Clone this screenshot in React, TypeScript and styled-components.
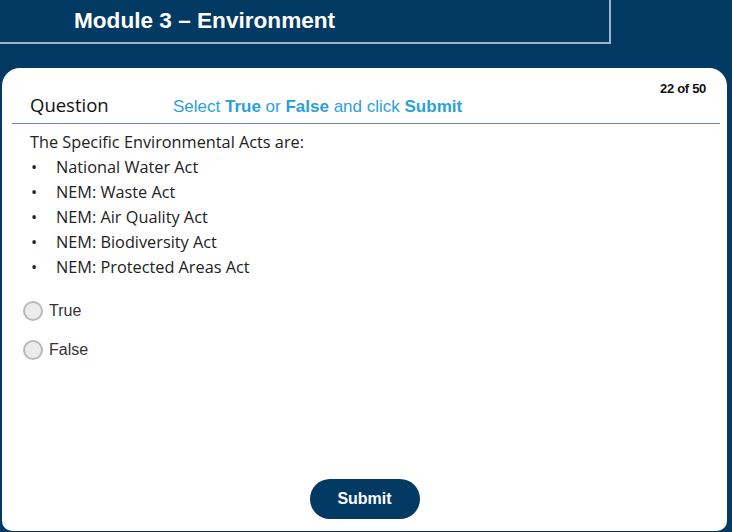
import React, { useState } from "react";
import styled, { createGlobalStyle } from "styled-components";

const navy = "#033a64";

const GlobalStyle = createGlobalStyle`
  html, body {
    margin: 0;
    padding: 0;
    background: ${navy};
    height: 100%;
  }
  body {
    font-family: "Liberation Sans", Arial, sans-serif;
    overflow: hidden;
  }
`;

const Page = styled.div`
  width: 732px;
  height: 532px;
  display: flex;
  flex-direction: column;
  background: ${navy};
`;

const TitleBar = styled.header`
  box-sizing: border-box;
  width: 611px;
  height: 44px;
  padding-left: 74px;
  display: flex;
  align-items: center;
  border-right: 2px solid #9db4cc;
  border-bottom: 2px solid #9db4cc;
`;

const Title = styled.h1`
  margin: 0;
  color: #fff;
  font-family: "Liberation Sans", Arial, sans-serif;
  font-weight: 700;
  font-size: 22.6px;
`;

const Card = styled.main`
  box-sizing: border-box;
  margin: 24px 5px 1px 2px;
  flex: 1;
  background: #fff;
  border-radius: 18px 18px 10px 10px;
  display: flex;
  flex-direction: column;
`;

const QuestionHead = styled.div`
  display: flex;
  align-items: flex-end;
  margin: 0 7px 0 10px;
  padding: 0 0 8px 18px;
  height: 56px;
  box-sizing: border-box;
  border-bottom: 1.5px solid #6a8cb0;
`;

const HeadLabel = styled.span`
  width: 143px;
  font-family: "Open Sans", sans-serif;
  font-size: 18.5px;
  color: #111;
  line-height: 20px;
`;

const Instruction = styled.span`
  flex: 1;
  margin-bottom: -2px;
  font-size: 17px;
  color: #2c9fd9;
  line-height: 20px;
  b {
    font-weight: 700;
  }
`;

const Counter = styled.span`
  align-self: flex-start;
  margin-top: 13px;
  margin-right: 14px;
  font-size: 13px;
  font-weight: 700;
  color: #111;
  letter-spacing: -0.3px;
`;

const Body = styled.section`
  padding: 6px 0 0 28px;
  font-family: "Open Sans", sans-serif;
  font-size: 16.3px;
  color: #222;
`;

const Lead = styled.p`
  margin: 0;
  line-height: 25px;
`;

const ActList = styled.ul`
  margin: 0;
  padding: 0;
  list-style: none;
`;

const Act = styled.li`
  display: flex;
  line-height: 25px;
  &::before {
    content: "•";
    width: 25px;
    padding-left: 1px;
    flex: none;
  }
`;

const Options = styled.div`
  margin: 21px 0 0 21px;
  display: flex;
  flex-direction: column;
  gap: 19px;
`;

const Option = styled.label`
  display: flex;
  align-items: center;
  gap: 6px;
  font-size: 16px;
  color: #333;
  cursor: pointer;
  height: 20px;
`;

const Radio = styled.span<{ $checked: boolean }>`
  box-sizing: border-box;
  width: 20px;
  height: 20px;
  border-radius: 50%;
  border: 2px solid #b9b9b9;
  background: ${(p) => (p.$checked ? "radial-gradient(circle, #555 35%, #eee 40%)" : "#ececec")};
`;

const Footer = styled.div`
  margin-top: auto;
  display: flex;
  justify-content: center;
  padding: 0 0 12px 0;
`;

const SubmitButton = styled.button`
  width: 110px;
  height: 40px;
  border: none;
  border-radius: 20px;
  background: ${navy};
  color: #fff;
  font-family: "Liberation Sans", Arial, sans-serif;
  font-weight: 700;
  font-size: 16px;
  cursor: pointer;
`;

const acts = [
  "National Water Act",
  "NEM: Waste Act",
  "NEM: Air Quality Act",
  "NEM: Biodiversity Act",
  "NEM: Protected Areas Act",
];

export default function App() {
  const [answer, setAnswer] = useState<string | null>(null);

  return (
    <Page>
      <GlobalStyle />
      <TitleBar>
        <Title>Module 3 – Environment</Title>
      </TitleBar>
      <Card>
        <QuestionHead>
          <HeadLabel>Question</HeadLabel>
          <Instruction>
            Select <b>True</b> or <b>False</b> and click <b>Submit</b>
          </Instruction>
          <Counter>22 of 50</Counter>
        </QuestionHead>
        <Body>
          <Lead>The Specific Environmental Acts are:</Lead>
          <ActList>
            {acts.map((a) => (
              <Act key={a}>{a}</Act>
            ))}
          </ActList>
        </Body>
        <Options>
          {["True", "False"].map((o) => (
            <Option key={o} onClick={() => setAnswer(o)}>
              <Radio $checked={answer === o} />
              {o}
            </Option>
          ))}
        </Options>
        <Footer>
          <SubmitButton>Submit</SubmitButton>
        </Footer>
      </Card>
    </Page>
  );
}
